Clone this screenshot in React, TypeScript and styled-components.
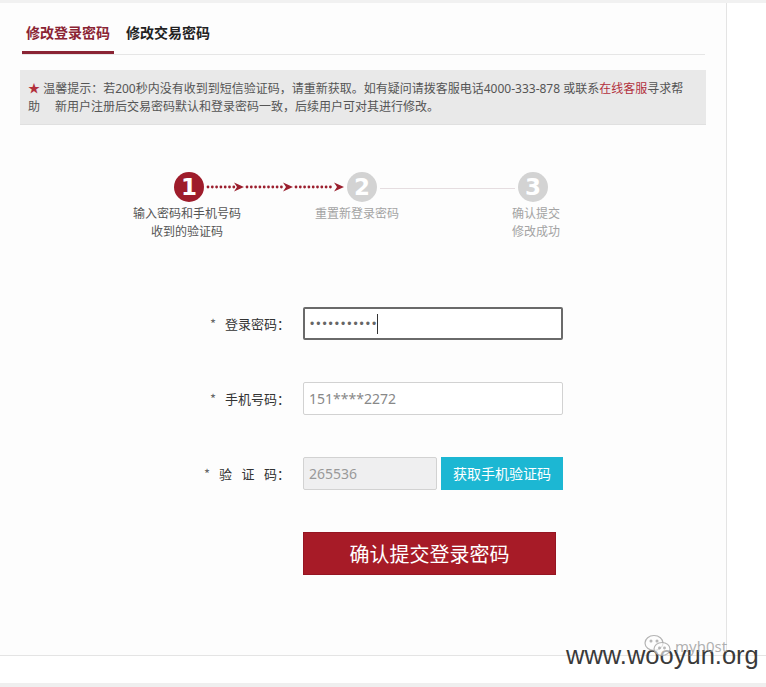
import React from "react";
import styled, { createGlobalStyle } from "styled-components";

const GlobalStyle = createGlobalStyle`
  html, body { margin: 0; padding: 0; background: #fff; }
  body { font-family: "Noto Sans", "Noto Sans CJK SC", sans-serif; color: #333; }
  * { box-sizing: border-box; }
`;

const Page = styled.div`
  position: relative;
  width: 766px;
  height: 687px;
  border-top: 3px solid #f1f1f1;
  border-bottom: 4px solid #efefef;
  display: flex;
  flex-direction: column;
  overflow: hidden;
`;

const Upper = styled.div`
  display: flex;
  height: 653px;
  border-bottom: 1px solid #e4e4e4;
`;

const MainPanel = styled.div`
  width: 727px;
  border-right: 1px solid #e4e4e4;
  padding: 0 20px;
  background: #fdfdfd;
`;

const SidePanel = styled.div`
  flex: 1;
  background: #fff;
`;

const TabBar = styled.div`
  display: flex;
  gap: 8px;
  margin: 0 1px 0 2px;
  padding-top: 19px;
  border-bottom: 1px solid #e6e6e6;
`;

const Tab = styled.div<{ $active?: boolean }>`
  padding: 0 4px 9px;
  font-size: 14px;
  line-height: 20px;
  font-weight: 700;
  font-family: "Noto Sans CJK SC", sans-serif;
  color: ${(p) => (p.$active ? "#8a2434" : "#222")};
  border-bottom: 3px solid ${(p) => (p.$active ? "#8a2434" : "transparent")};
`;

const Notice = styled.div`
  margin-top: 15px;
  height: 55px;
  padding: 10px 8px 9px;
  background: #e9e9e9;
  border-bottom: 1px solid #e0e0e0;
  font-size: 12px;
  line-height: 18px;
  color: #555;
  white-space: nowrap;
`;

const NoticeLine = styled.div``;

const Red = styled.span`
  color: #b2303c;
`;

const Indent = styled.span`
  display: inline-block;
  width: 15px;
`;

const Steps = styled.div`
  margin-top: 47px;
`;

const Track = styled.div`
  display: flex;
  align-items: center;
  padding-left: 154px;
  height: 30px;
`;

const Circle = styled.div<{ $done?: boolean }>`
  width: 30px;
  height: 30px;
  border-radius: 50%;
  background: ${(p) => (p.$done ? "#9e1c2b" : "#d3d3d3")};
  color: #fff;
  font-family: "DejaVu Sans", sans-serif;
  font-weight: 700;
  font-size: 23px;
  line-height: 30px;
  text-align: center;
`;

const GrayLine = styled.div`
  width: 141px;
  height: 1px;
  margin-top: 2px;
  padding: 0 3px;
  background: #e5dde0;
  background-clip: content-box;
`;

const LabelRow = styled.div`
  display: flex;
  margin-top: 2px;
  padding-left: 107px;
`;

const StepLabel = styled.div<{ $offset: number; $done?: boolean }>`
  width: 120px;
  margin-left: ${(p) => p.$offset}px;
  text-align: center;
  font-size: 12px;
  line-height: 18px;
  font-family: "Noto Sans CJK SC", sans-serif;
  color: ${(p) => (p.$done ? "#555" : "#a3a3a3")};
`;

const Form = styled.div`
  margin-top: 67px;
  display: flex;
  flex-direction: column;
  gap: 42px;
`;

const FormRow = styled.div`
  display: flex;
  align-items: center;
  padding-left: 170px;
  height: 33px;
`;

const Label = styled.div`
  width: 100px;
  text-align: right;
  font-size: 13px;
  font-family: "Noto Sans CJK SC", sans-serif;
  color: #333;
  white-space: nowrap;
`;

const Star = styled.span`
  color: #666;
  margin-right: 9px;
`;

const Spread = styled.span`
  letter-spacing: 9.5px;
`;

const Field = styled.div<{ $w: number; $focus?: boolean; $disabled?: boolean }>`
  width: ${(p) => p.$w}px;
  height: 33px;
  margin-left: 13px;
  display: flex;
  align-items: center;
  padding-left: 5px;
  border: ${(p) => (p.$focus ? "2px solid #6a6a6a" : "1px solid #d2d2d2")};
  border-radius: 2px;
  background: ${(p) => (p.$disabled ? "#efeff0" : "#fff")};
  font-size: 14px;
  color: ${(p) => (p.$disabled ? "#999" : "#888")};
  font-family: "Noto Sans", sans-serif;
`;

const Dots = styled.span`
  font-family: "Liberation Sans", sans-serif;
  font-size: 12px;
  letter-spacing: 2px;
  color: #666;
`;

const Caret = styled.span`
  display: inline-block;
  width: 1px;
  height: 20px;
  background: #333;
  margin-left: -1px;
`;

const CodeButton = styled.div`
  width: 122px;
  height: 33px;
  margin-left: 4px;
  background: #1cb7d3;
  color: #fff;
  font-size: 14px;
  line-height: 33px;
  text-align: center;
  font-family: "Noto Sans CJK SC", sans-serif;
`;

const Submit = styled.div`
  margin: 42px 0 0 283px;
  width: 253px;
  height: 43px;
  background: #a71b27;
  border: 1px solid #951522;
  color: #fff;
  font-size: 20px;
  line-height: 41px;
  text-align: center;
  font-family: "Noto Sans CJK SC", sans-serif;
`;

const Watermark = styled.div`
  position: absolute;
  left: 566px;
  top: 637px;
  font-family: "Liberation Sans", sans-serif;
  font-size: 25.5px;
  color: #3a3a3a;
  line-height: 30px;
  white-space: nowrap;
`;

const Credit = styled.div`
  position: absolute;
  left: 644px;
  top: 631px;
  display: flex;
  align-items: center;
  gap: 3px;
  font-family: "Noto Sans", sans-serif;
  font-size: 15px;
  color: rgba(150, 150, 150, 0.75);
`;

const Arrow = ({ tip }: { tip: number }) => (
  <path d={`M${tip - 10} 1.5 L${tip} 6 L${tip - 10} 10.5 L${tip - 7} 6 Z`} fill="#9b1f2e" />
);

const DottedConnector = () => {
  const segs: [number, number][] = [
    [4, 30],
    [43, 79],
    [92, 130],
  ];
  const dots: number[] = [];
  segs.forEach(([a, b]) => {
    for (let x = a; x <= b; x += 4.3) dots.push(x);
  });
  return (
    <svg width="143" height="12" viewBox="0 0 143 12">
      {dots.map((x, i) => (
        <circle key={i} cx={x} cy={6} r={1.4} fill="#9b1f2e" />
      ))}
      <Arrow tip={40} />
      <Arrow tip={89} />
      <Arrow tip={140} />
    </svg>
  );
};

const WeChatIcon = () => (
  <svg width="28" height="24" viewBox="0 0 28 24" fill="none" stroke="rgba(160,160,160,0.8)" strokeWidth="1.2">
    <ellipse cx="10" cy="9" rx="9" ry="7.5" />
    <ellipse cx="18" cy="15" rx="8" ry="6.5" fill="rgba(255,255,255,0.6)" />
    <circle cx="7" cy="7" r="0.9" />
    <circle cx="13" cy="7" r="0.9" />
    <circle cx="15.5" cy="14" r="0.8" />
    <circle cx="20.5" cy="14" r="0.8" />
  </svg>
);

export default function App() {
  return (
    <>
      <GlobalStyle />
      <Page>
        <Upper>
          <MainPanel>
            <TabBar>
              <Tab $active>修改登录密码</Tab>
              <Tab>修改交易密码</Tab>
            </TabBar>
            <Notice>
              <NoticeLine>
                <Red>★</Red> 温馨提示：若200秒内没有收到到短信验证码，请重新获取。如有疑问请拨客服电话4000-333-878 或联系<Red>在线客服</Red>寻求帮
              </NoticeLine>
              <NoticeLine>
                助<Indent />新用户注册后交易密码默认和登录密码一致，后续用户可对其进行修改。
              </NoticeLine>
            </Notice>
            <Steps>
              <Track>
                <Circle $done>1</Circle>
                <DottedConnector />
                <Circle>2</Circle>
                <GrayLine />
                <Circle>3</Circle>
              </Track>
              <LabelRow>
                <StepLabel $offset={0} $done>
                  输入密码和手机号码
                  <br />
                  收到的验证码
                </StepLabel>
                <StepLabel $offset={50}>重置新登录密码</StepLabel>
                <StepLabel $offset={59}>
                  确认提交
                  <br />
                  修改成功
                </StepLabel>
              </LabelRow>
            </Steps>
            <Form>
              <FormRow>
                <Label>
                  <Star>*</Star>登录密码：
                </Label>
                <Field $w={260} $focus>
                  <Dots>•••••••••••</Dots>
                  <Caret />
                </Field>
              </FormRow>
              <FormRow>
                <Label>
                  <Star>*</Star>手机号码：
                </Label>
                <Field $w={260}>151****2272</Field>
              </FormRow>
              <FormRow>
                <Label>
                  <Star>*</Star>
                  <Spread>验证</Spread>码：
                </Label>
                <Field $w={134} $disabled>
                  265536
                </Field>
                <CodeButton>获取手机验证码</CodeButton>
              </FormRow>
            </Form>
            <Submit>确认提交登录密码</Submit>
          </MainPanel>
          <SidePanel />
        </Upper>
        <Watermark>www.wooyun.org</Watermark>
        <Credit>
          <WeChatIcon />
          <span>myh0st</span>
        </Credit>
      </Page>
    </>
  );
}
